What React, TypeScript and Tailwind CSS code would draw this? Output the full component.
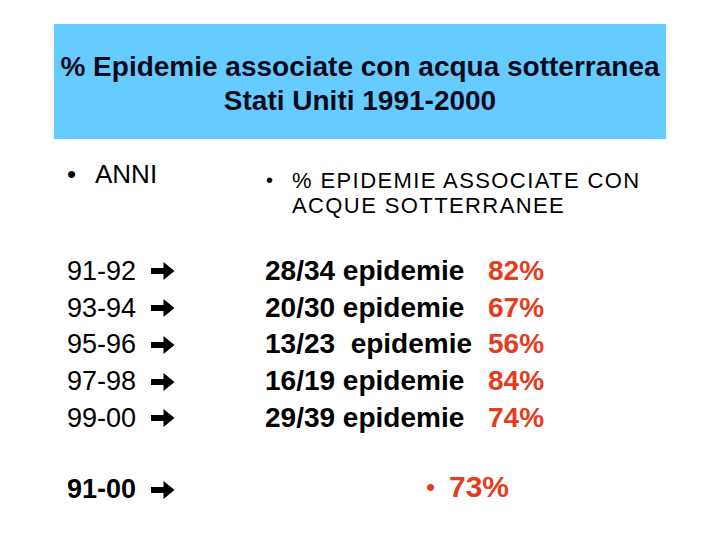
import React from "react";

function Arrow() {
  return (
    <svg width="24" height="18" viewBox="0 0 24 18" className="shrink-0">
      <path d="M0 6 H12.5 V0 L23.5 9 L12.5 18 V12 H0 Z" fill="#000" />
    </svg>
  );
}

const years = ["91-92", "93-94", "95-96", "97-98", "99-00"];
const data: [string, string][] = [
  ["28/34 epidemie", "82%"],
  ["20/30 epidemie", "67%"],
  ["13/23  epidemie", "56%"],
  ["16/19 epidemie", "84%"],
  ["29/39 epidemie", "74%"],
];

export default function App() {
  return (
    <div className="w-[720px] h-[540px] bg-white font-['Liberation_Sans',Arial,sans-serif] text-black overflow-hidden">
      <div className="pt-[24px] pl-[54px]">
        <div className="w-[612px] h-[115px] bg-[#66ccff] flex flex-col items-center justify-center pt-[4px] text-[28px] font-bold leading-[34px] text-[#0a0a1a]">
          <div>% Epidemie associate con acqua sotterranea</div>
          <div>Stati Uniti 1991-2000</div>
        </div>
      </div>

      <div className="pl-[67px] pt-[20px] flex">
        <div className="w-[198px] flex items-center text-[26px] leading-[30px] h-[30px]">
          <span className="w-[28px]">•</span>
          <span>ANNI</span>
        </div>
        <div className="pt-[8.5px] flex text-[22px] leading-[25px]">
          <span className="w-[27px] pl-[1px] text-[20px]">•</span>
          <span className="tracking-[1.4px]">
            % EPIDEMIE ASSOCIATE CON
            <br />
            ACQUE SOTTERRANEE
          </span>
        </div>
      </div>

      <div className="pl-[67px] pt-[35px] flex flex-col">
        {years.map((y, i) => (
          <div key={y} className="flex h-[36.75px] items-center">
            <div className="w-[198px] flex items-center">
              <span className="text-[27px] leading-[36px]">{y}</span>
              <span className="ml-[15px] mt-[1px]">
                <Arrow />
              </span>
            </div>
            <div className="flex items-center text-[28px] font-bold leading-[36px]">
              <span className="w-[223px] whitespace-pre">{data[i][0]}</span>
              <span className="text-[#e63c1e]">{data[i][1]}</span>
            </div>
          </div>
        ))}
      </div>

      <div className="pl-[67px] pt-[37.5px] flex items-center h-[68px]">
        <div className="w-[359px] flex items-center">
          <span className="text-[27px] font-bold leading-[30px]">91-00</span>
          <span className="ml-[15px] mt-[1px]">
            <Arrow />
          </span>
        </div>
        <div className="flex items-center text-[#e63c1e] -mt-[4px]">
          <span className="text-[26px] w-[23px] leading-[30px]">•</span>
          <span className="text-[30px] font-bold leading-[34px]">73%</span>
        </div>
      </div>
    </div>
  );
}
